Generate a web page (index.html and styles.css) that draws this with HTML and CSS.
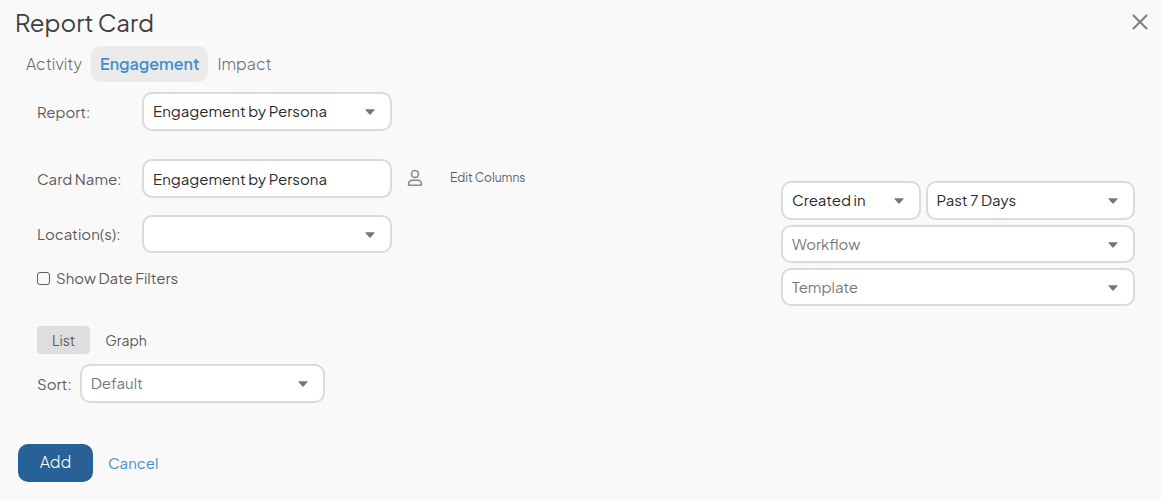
FILE: index.html
```html
<!DOCTYPE html>
<html lang="en">
<head>
    <meta charset="UTF-8">
    <meta name="viewport" content="width=device-width, initial-scale=1.0">
    <title>Report Card</title>
    <link rel="stylesheet" href="styles.css">
</head>
<body>
    <header class="header">
        <h1 class="title">Report Card</h1>
        <button type="button" class="close" aria-label="Close">
            <svg width="16" height="16" viewBox="0 0 16 16" fill="none" stroke="currentColor" stroke-width="2.2" stroke-linecap="round">
                <path d="M1.5 1.5l13 13M14.5 1.5l-13 13"/>
            </svg>
        </button>
    </header>

    <nav class="tabs">
        <a href="#activity" class="tab">Activity</a>
        <a href="#engagement" class="tab active">Engagement</a>
        <a href="#impact" class="tab">Impact</a>
    </nav>

    <form>
        <div class="content">
            <div class="settings">
                <div class="form-row report-row">
                    <label for="report">Report:</label>
                    <select id="report" class="field">
                        <option>Engagement by Persona</option>
                    </select>
                </div>
                <div class="form-row name-row">
                    <label for="cardName">Card Name:</label>
                    <input type="text" id="cardName" class="field" value="Engagement by Persona">
                    <div class="row-tools">
                        <button type="button" class="persona" aria-label="Persona">
                            <svg width="16" height="18" viewBox="0 0 16 18" fill="none" stroke="currentColor" stroke-width="1.6" stroke-linejoin="round">
                                <circle cx="8" cy="5" r="3.5"/>
                                <path d="M1.6 16.2v-.9c0-2.4 1.6-4.1 4-4.1h4.8c2.4 0 4 1.7 4 4.1v.9z"/>
                            </svg>
                        </button>
                        <a href="#columns" class="edit-columns">Edit Columns</a>
                    </div>
                </div>
                <div class="form-row">
                    <label for="location">Location(s):</label>
                    <select id="location" class="field short">
                        <option></option>
                    </select>
                </div>
                <div class="check-row">
                    <input type="checkbox" id="dateFilters">
                    <label for="dateFilters">Show Date Filters</label>
                </div>
                <div class="view-toggle">
                    <button type="button" class="view active">List</button>
                    <button type="button" class="view">Graph</button>
                </div>
                <div class="sort-row">
                    <label for="sort">Sort:</label>
                    <select id="sort" class="field muted">
                        <option>Default</option>
                    </select>
                </div>
            </div>

            <div class="filters">
                <select class="field" aria-label="Date type">
                    <option>Created in</option>
                </select>
                <select class="field" aria-label="Date range">
                    <option>Past 7 Days</option>
                </select>
                <select class="field short muted wide" aria-label="Workflow">
                    <option>Workflow</option>
                </select>
                <select class="field short muted wide" aria-label="Template">
                    <option>Template</option>
                </select>
            </div>
        </div>

        <div class="actions">
            <button type="submit" class="add">Add</button>
            <a href="#cancel" class="cancel">Cancel</a>
        </div>
    </form>
</body>
</html>
```
FILE: styles.css
```css
* {
    box-sizing: border-box;
}
body {
    margin: 0;
    padding: 6px 0 18px;
    font-family: "Plus Jakarta Sans", Inter, sans-serif;
    font-size: 15px;
    line-height: 24px;
    color: #5c5c5c;
    background-color: #f9f9f9;
}
button, input, select {
    font: inherit;
    color: inherit;
}
button {
    padding: 0;
    border: none;
    background: none;
    cursor: pointer;
}
a {
    text-decoration: none;
    color: inherit;
}
svg {
    display: block;
}
.header {
    display: flex;
    align-items: center;
    justify-content: space-between;
    padding: 0 13px 0 15px;
    margin-bottom: 8px;
}
.title {
    margin: 0;
    font-size: 24px;
    font-weight: 400;
    line-height: 32px;
    color: #404040;
}
.close {
    color: #838383;
}
.tabs {
    display: flex;
    padding-left: 17px;
    margin-bottom: 10px;
}
.tab {
    padding: 6px 9px;
    border-radius: 10px;
    font-size: 16px;
    font-weight: 300;
    color: #6c6c6c;
}
.tab.active {
    font-weight: 600;
    color: #4590cc;
    background-color: #ebebeb;
}
.content {
    display: flex;
    align-items: flex-start;
    justify-content: space-between;
    padding: 0 26px 0 37px;
}
.form-row {
    display: flex;
    align-items: center;
}
.form-row label {
    width: 105px;
}
.form-row .field {
    width: 250px;
}
.report-row {
    margin-bottom: 28px;
}
.name-row {
    margin-bottom: 17px;
}
.field {
    height: 39px;
    padding: 0 9px 2px;
    border: 2px solid #dadada;
    border-radius: 10px;
    color: #2b2b2b;
    background-color: #fff;
}
input.field {
    padding-bottom: 0;
}
.field.short {
    height: 38px;
    padding-bottom: 0;
}
select.field {
    appearance: none;
    background-image: url("data:image/svg+xml,%3Csvg xmlns='http://www.w3.org/2000/svg' width='10' height='6'%3E%3Cpath d='M.8.3h8.4q.8.1.3.8L5.8 5.3q-.8.7-1.6 0L.5 1.1Q0 .4.8.3z' fill='%23777'/%3E%3C/svg%3E");
    background-repeat: no-repeat;
    background-position: right 15px top 15px;
}
.field.muted {
    color: #787878;
}
.row-tools {
    display: flex;
    align-items: center;
    gap: 27px;
    padding: 0 0 2px 15px;
}
.persona {
    color: #8a8a8a;
}
.edit-columns {
    font-size: 12px;
}
.check-row {
    display: flex;
    align-items: center;
    gap: 6px;
    margin: 13px 0 36px;
}
.check-row input {
    appearance: none;
    width: 13px;
    height: 13px;
    margin: 0;
    border: 1px solid #5c5c5c;
    border-radius: 3px;
}
.check-row input:checked {
    background-color: #4590cc;
}
.view-toggle {
    display: flex;
    margin-bottom: 10px;
}
.view {
    height: 28px;
    padding: 0 15px;
    border-radius: 4px;
    font-size: 14px;
}
.view.active {
    background-color: #dedede;
}
.sort-row {
    display: flex;
    align-items: center;
    gap: 8px;
}
.sort-row .field {
    width: 245px;
}
.filters {
    display: grid;
    grid-template-columns: 2fr 3fr;
    gap: 5px;
    width: 354px;
    margin-top: 89px;
}
.wide {
    grid-column: 1 / -1;
}
.actions {
    display: flex;
    align-items: center;
    gap: 15px;
    padding-left: 18px;
    margin-top: 41px;
}
.add {
    width: 75px;
    height: 38px;
    padding-bottom: 2px;
    border-radius: 10px;
    font-size: 16px;
    font-weight: 300;
    color: #fff;
    background-color: #286196;
}
.add:hover {
    background-color: #1f5080;
}
.cancel {
    color: #4590cc;
}
.cancel:hover {
    text-decoration: underline;
}
```
